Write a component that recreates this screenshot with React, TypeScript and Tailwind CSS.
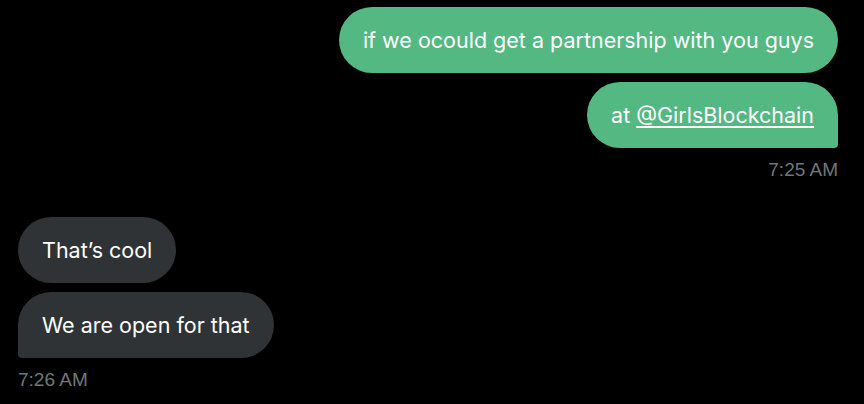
import React from "react";

export default function App() {
  const font = { fontFamily: "Inter, 'Noto Sans', sans-serif" };
  const ts = { fontFamily: "'Liberation Sans', Arial, sans-serif" };
  return (
    <div className="w-[864px] h-[404px] bg-black overflow-hidden">
      <div className="flex flex-col px-[26px] pt-[7px]" style={font}>
        <div className="flex flex-col items-end gap-[9px]">
          <div className="bg-[#54b883] text-white text-[21.5px] leading-[26px] px-[24px] py-[20px] rounded-[33px]">
            if we ocould get a partnership with you guys
          </div>
          <div className="bg-[#54b883] text-white text-[21.5px] leading-[26px] px-[24px] py-[20px] rounded-[33px] rounded-br-[4px]">
            at <span className="underline underline-offset-[3px]">@GirlsBlockchain</span>
          </div>
        </div>
        <div className="self-end mt-[10px] text-[#71767b] text-[19px] leading-[23px]" style={ts}>
          7:25 AM
        </div>
        <div className="flex flex-col items-start gap-[9px] mt-[36px] ml-[-8px]">
          <div className="bg-[#2f3336] text-white text-[21.5px] leading-[26px] px-[24px] py-[20px] rounded-[33px]">
            That’s cool
          </div>
          <div className="bg-[#2f3336] text-white text-[21.5px] leading-[26px] px-[24px] py-[20px] rounded-[33px] rounded-bl-[4px]">
            We are open for that
          </div>
        </div>
        <div className="self-start ml-[-8px] mt-[10px] text-[#71767b] text-[19px] leading-[23px]" style={ts}>
          7:26 AM
        </div>
      </div>
    </div>
  );
}
